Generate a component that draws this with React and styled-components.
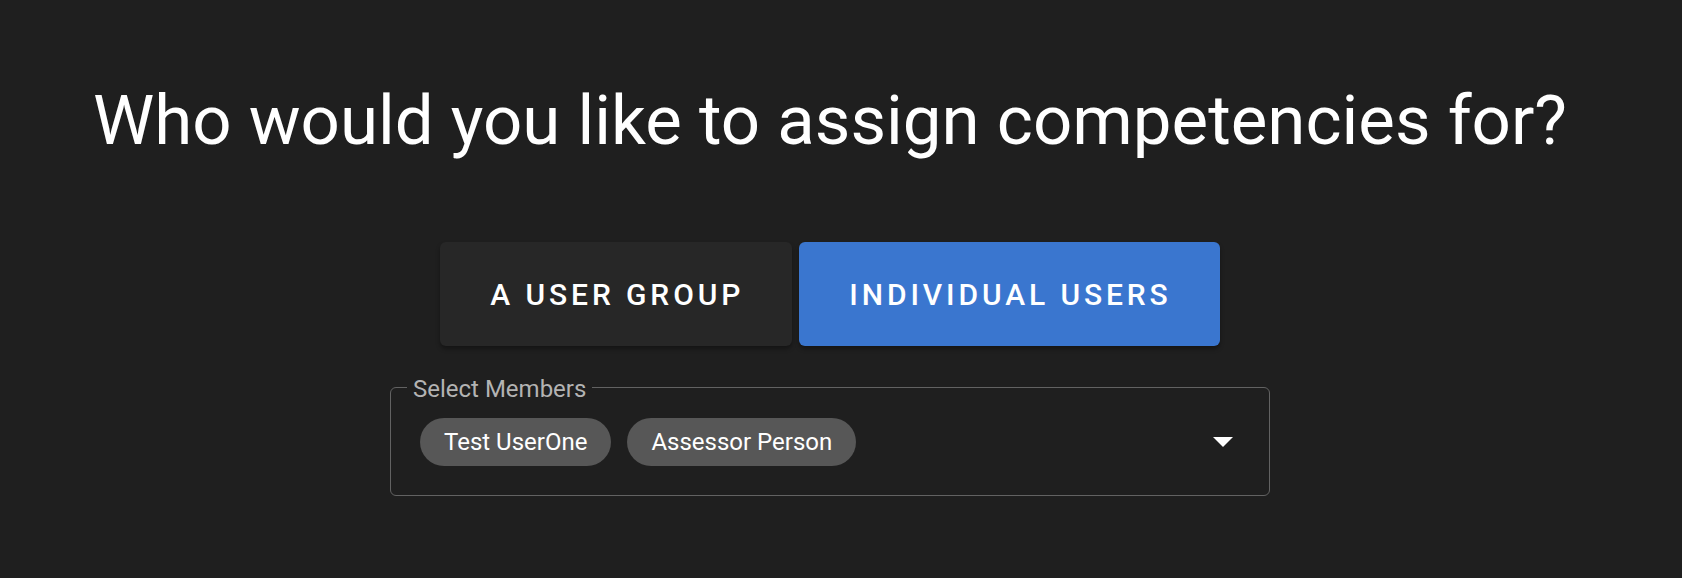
import React from "react"
import styled, { createGlobalStyle } from "styled-components"

const GlobalStyle = createGlobalStyle`
  body {
    margin: 0;
    background: #1f1f1f;
    font-family: Roboto, "Liberation Sans", sans-serif;
    color: #fff;
  }
`

const members = ["Test UserOne", "Assessor Person"]

function App() {
  return (
    <>
      <GlobalStyle />
      <Page>
        <Title>Who would you like to assign competencies for?</Title>
        <ToggleRow>
          <ToggleButton>A User Group</ToggleButton>
          <ToggleButton $active>Individual Users</ToggleButton>
        </ToggleRow>
        <SelectBox>
          <Legend>Select Members</Legend>
          <ChipRow>
            {members.map((m) => (
              <Chip key={m}>{m}</Chip>
            ))}
            <Arrow viewBox="0 0 20 10" aria-hidden="true">
              <polygon points="0,0 20,0 10,10" fill="#fff" />
            </Arrow>
          </ChipRow>
        </SelectBox>
      </Page>
    </>
  )
}

export default App

const Page = styled.div`
  width: 1660px;
  display: flex;
  flex-direction: column;
  align-items: center;
  padding-top: 79px;
`

const Title = styled.h1`
  margin: 0;
  font-size: 69px;
  font-weight: 400;
  line-height: 84px;
  color: #fff;
`

const ToggleRow = styled.div`
  display: flex;
  gap: 7px;
  margin-top: 79px;
`

const ToggleButton = styled.button`
  height: 104px;
  padding: 0 48px 0 50px;
  border: none;
  border-radius: 6px;
  font-family: Roboto, "Liberation Sans", sans-serif;
  font-size: 30px;
  font-weight: 500;
  letter-spacing: 3.9px;
  text-transform: uppercase;
  color: #fff;
  background: ${(p) => (p.$active ? "#3a76cf" : "#272727")};
  box-shadow: 0 3px 4px rgba(0, 0, 0, 0.35);
  cursor: pointer;
`

const SelectBox = styled.fieldset`
  width: 880px;
  box-sizing: border-box;
  margin: 29px 0 0;
  padding: 0;
  border: 1px solid #626262;
  border-radius: 6px;
`

const Legend = styled.legend`
  margin-left: 16px;
  padding: 4px 6px 0;
  font-size: 24px;
  line-height: 20px;
  color: #b3b3b3;
`

const ChipRow = styled.div`
  display: flex;
  align-items: center;
  gap: 16px;
  padding: 19px 36px 29px 29px;
`

const Chip = styled.span`
  height: 48px;
  padding: 0 24px;
  border-radius: 24px;
  background: #575757;
  font-size: 24px;
  line-height: 48px;
  color: #fff;
`

const Arrow = styled.svg`
  width: 20px;
  height: 10px;
  margin-left: auto;
`
